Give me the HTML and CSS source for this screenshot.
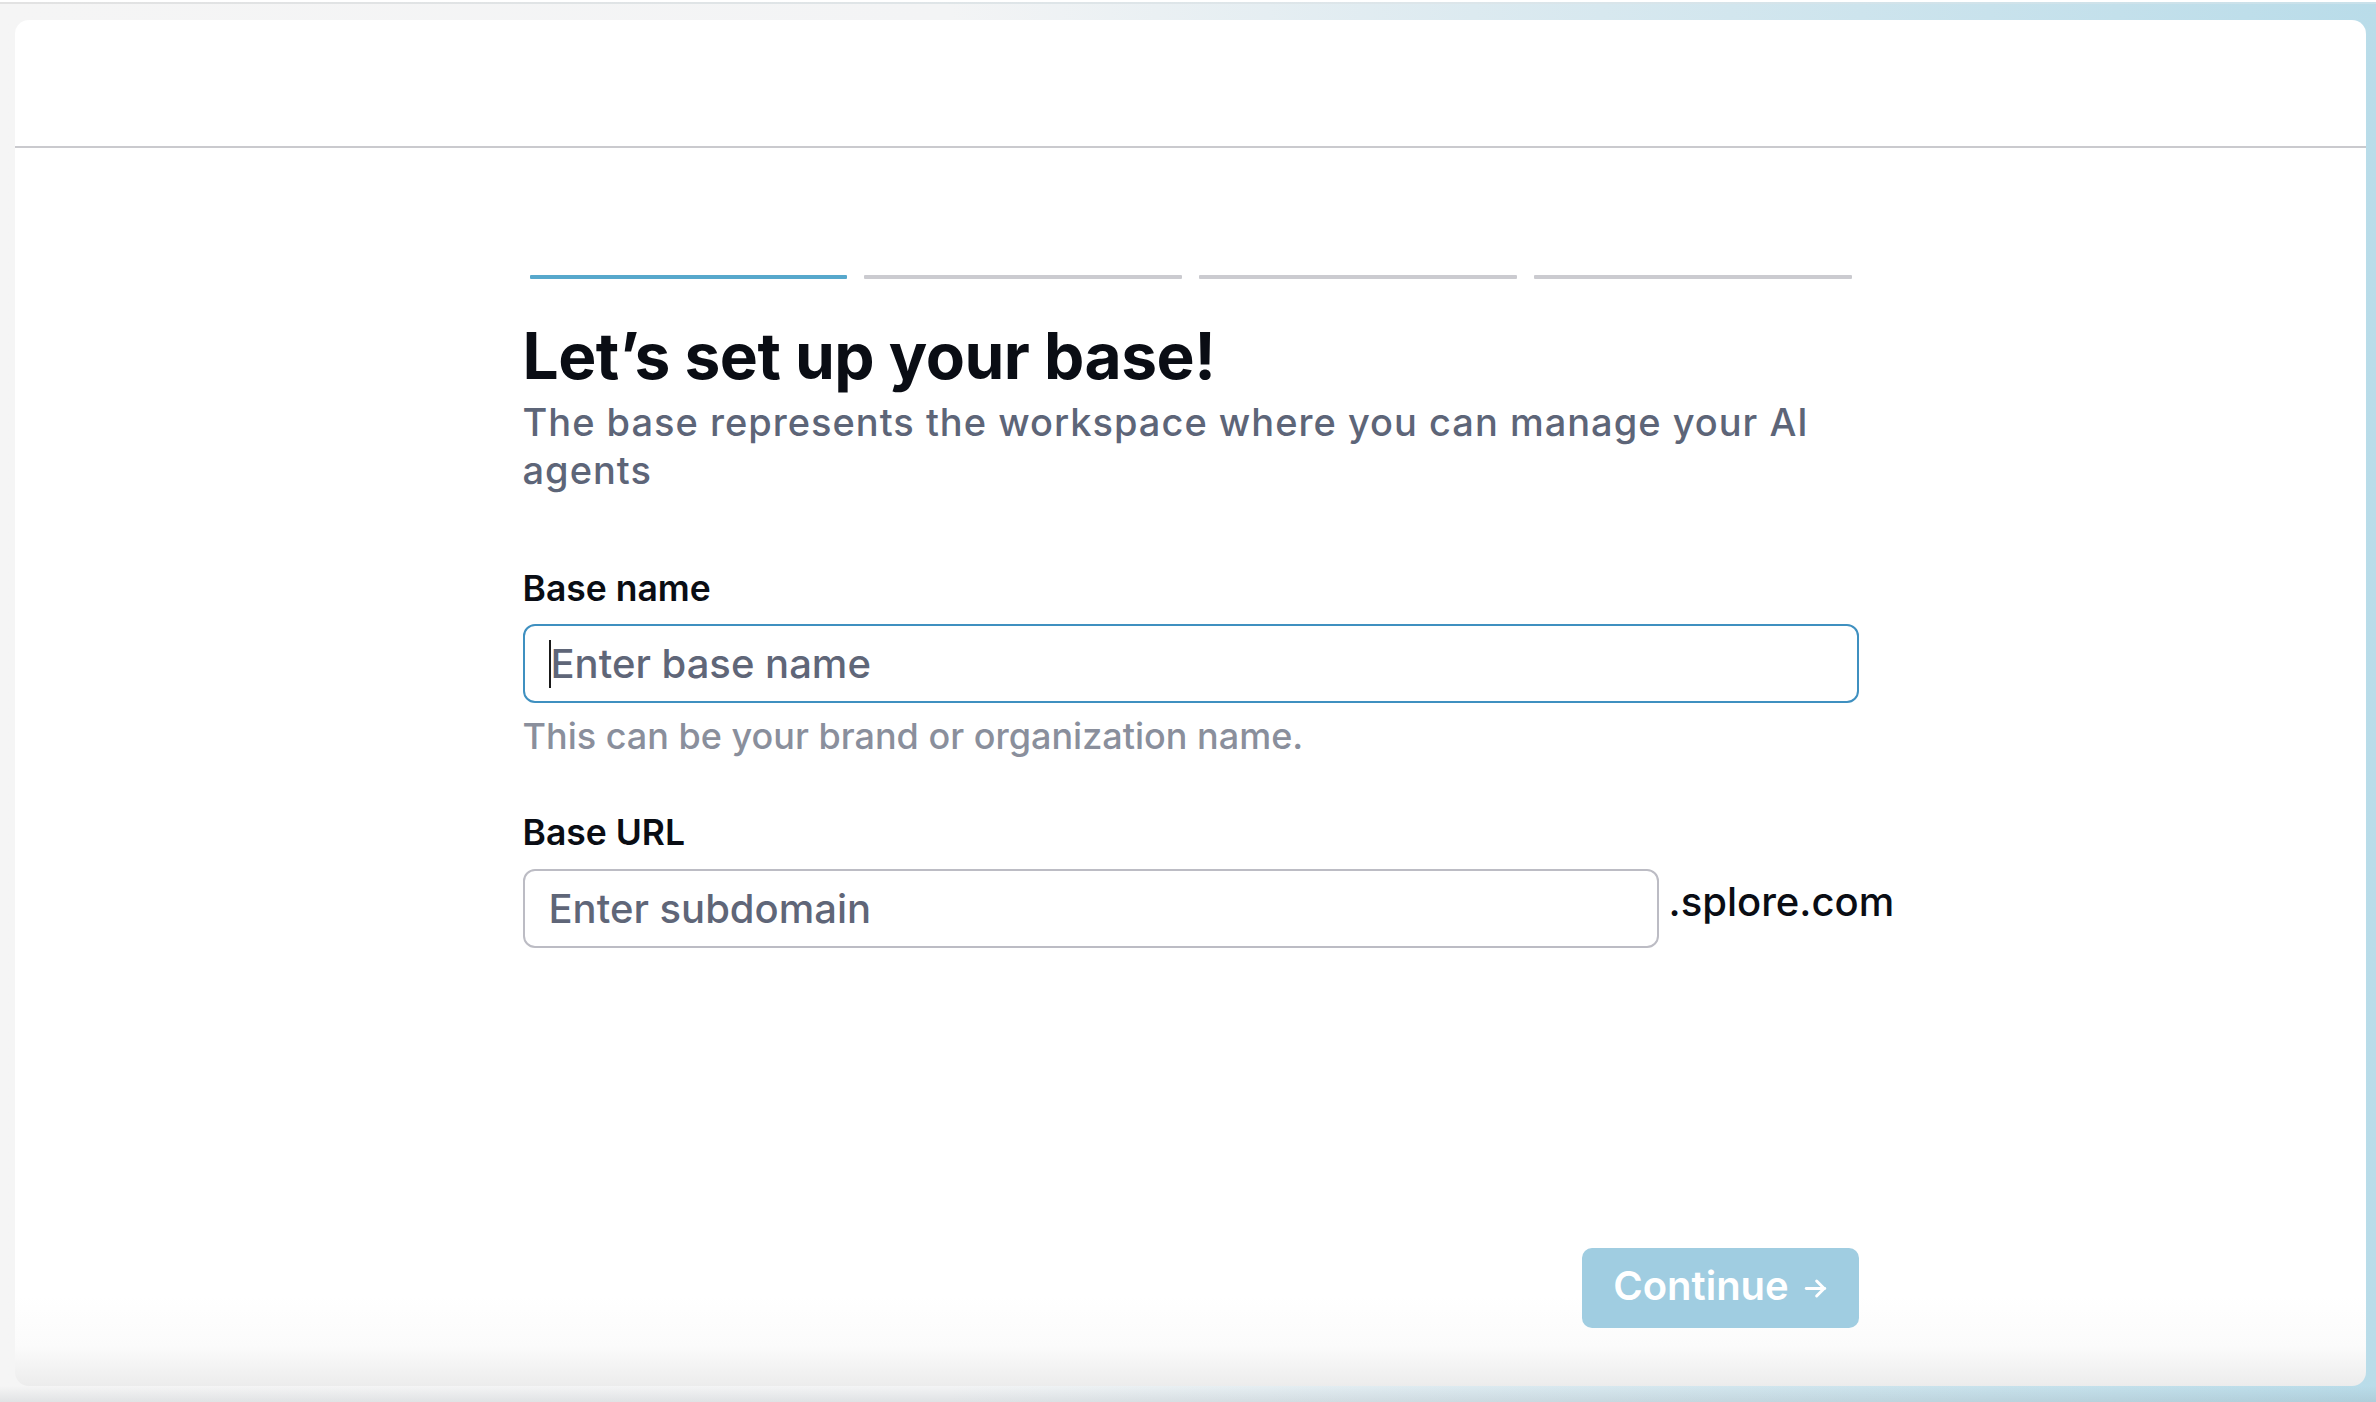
FILE: index.html
```html
<!DOCTYPE html>
<html lang="en">
<head>
<meta charset="utf-8">
<title>Set up your base</title>
<link rel="stylesheet" href="styles.css">
</head>
<body>
<div class="window">
  <div class="card">
    <header class="topbar"></header>
    <main class="content">
      <div class="steps">
        <span class="step active"></span>
        <span class="step"></span>
        <span class="step"></span>
        <span class="step"></span>
      </div>
      <h1 class="title">Let’s set up your base!</h1>
      <p class="subtitle">The base represents the workspace where you can manage your AI agents</p>

      <div class="field field-name">
        <label class="label">Base name</label>
        <div class="input focused"><span class="caret"></span><span class="placeholder">Enter base name</span></div>
        <p class="hint">This can be your brand or organization name.</p>
      </div>

      <div class="field field-url">
        <label class="label">Base URL</label>
        <div class="url-row">
          <div class="input url-input"><span class="placeholder">Enter subdomain</span></div>
          <span class="suffix">.splore.com</span>
        </div>
      </div>

      <div class="actions">
        <button class="btn-continue" type="button"><span class="btn-label">Continue</span>
          <svg class="arrow" viewBox="0 0 20 20" fill="none" stroke="currentColor" stroke-width="2.6" stroke-linecap="round" stroke-linejoin="round"><path d="M2 10h16"/><path d="M11 3.5l6.5 6.5-6.5 6.5"/></svg>
        </button>
      </div>
    </main>
  </div>
</div>
</body>
</html>
```

FILE: styles.css
```css
* { box-sizing: border-box; }

html, body {
  margin: 0;
  padding: 0;
  height: 100%;
}

body {
  font-family: "Inter", "Noto Sans", "Liberation Sans", sans-serif;
  background: #f5f5f5;
}

.window {
  height: 1402px;
  border-top: 2px solid #ffffff;
  background:
    linear-gradient(to bottom, transparent 0, transparent 1384px, rgba(120,130,140,0.18) 1402px),
    linear-gradient(to right, #f5f5f5 0%, #f3f4f5 40%, #dceaf0 62%, #b9dce9 100%);
  display: flex;
  padding: 18px 10px 16px 15px;
  position: relative;
}

.window::before {
  content: "";
  position: absolute;
  left: 0; right: 0; top: 0;
  height: 2px;
  background: linear-gradient(to right, #e2e2e2, #dde6ea 60%, #c9e1ea);
}

.card {
  flex: 1;
  display: flex;
  flex-direction: column;
  border-radius: 14px;
  background: linear-gradient(to bottom, #ffffff 0, #ffffff calc(100% - 90px), #fbfbfb calc(100% - 40px), #ececec 100%);
  overflow: hidden;
}

.topbar {
  height: 128px;
  flex: none;
  border-bottom: 2px solid #cacace;
}

.content {
  flex: 1;
  width: 1336px;
  margin: 0 auto;
  display: flex;
  flex-direction: column;
  padding-top: 127px;
  padding-bottom: 58px;
}

.steps {
  display: flex;
  gap: 17px;
  padding: 0 7px;
}

.step {
  flex: 1;
  height: 4px;
  background: #cbcbd0;
  border-radius: 1px;
}

.step.active {
  background: #57a8cc;
}

.title {
  margin: 40px 0 0;
  font-size: 64px;
  line-height: 74px;
  font-weight: 700;
  color: #0a0d14;
  letter-spacing: -0.5px;
}

.subtitle {
  margin: 5px 0 0;
  font-size: 38px;
  line-height: 48px;
  font-weight: 500;
  color: #5d6578;
  letter-spacing: 1px;
}

.field-name { margin-top: 75px; }
.field-url { margin-top: 57px; }

.label {
  display: block;
  font-size: 35.5px;
  line-height: 40px;
  font-weight: 600;
  color: #0a0d14;
}

.input {
  margin-top: 15px;
  height: 79px;
  border: 2px solid #bcbcc4;
  border-radius: 12px;
  display: flex;
  align-items: center;
  padding: 0 24px;
  background: #fff;
}

.input.focused {
  border-color: #3f90c0;
}

.caret {
  width: 2px;
  height: 48px;
  background: #1a1a1a;
  flex: none;
}

.placeholder {
  font-size: 40px;
  font-weight: 500;
  color: #5f6678;
  white-space: nowrap;
}

.hint {
  margin: 13px 0 0;
  font-size: 36px;
  line-height: 40px;
  font-weight: 500;
  color: #8a8f9c;
}

.url-row {
  display: flex;
  align-items: center;
  gap: 10px;
  width: 1370px;
}

.url-input {
  width: 1136px;
  flex: none;
  margin-top: 16px;
}

.suffix {
  font-size: 40px;
  font-weight: 500;
  color: #0a0d14;
  margin-top: 2px;
  white-space: nowrap;
}

.actions {
  margin-top: auto;
  display: flex;
  justify-content: flex-end;
}

.btn-continue {
  width: 277px;
  height: 80px;
  border: none;
  border-radius: 10px;
  background: #a0cde1;
  color: #ffffff;
  font-family: inherit;
  font-size: 40px;
  font-weight: 600;
  display: flex;
  align-items: center;
  justify-content: center;
  gap: 15px;
  padding: 0 0 4px;
}

.btn-label {
  line-height: 48px;
}

.arrow {
  width: 23px;
  height: 23px;
  margin-top: 4px;
}
```
